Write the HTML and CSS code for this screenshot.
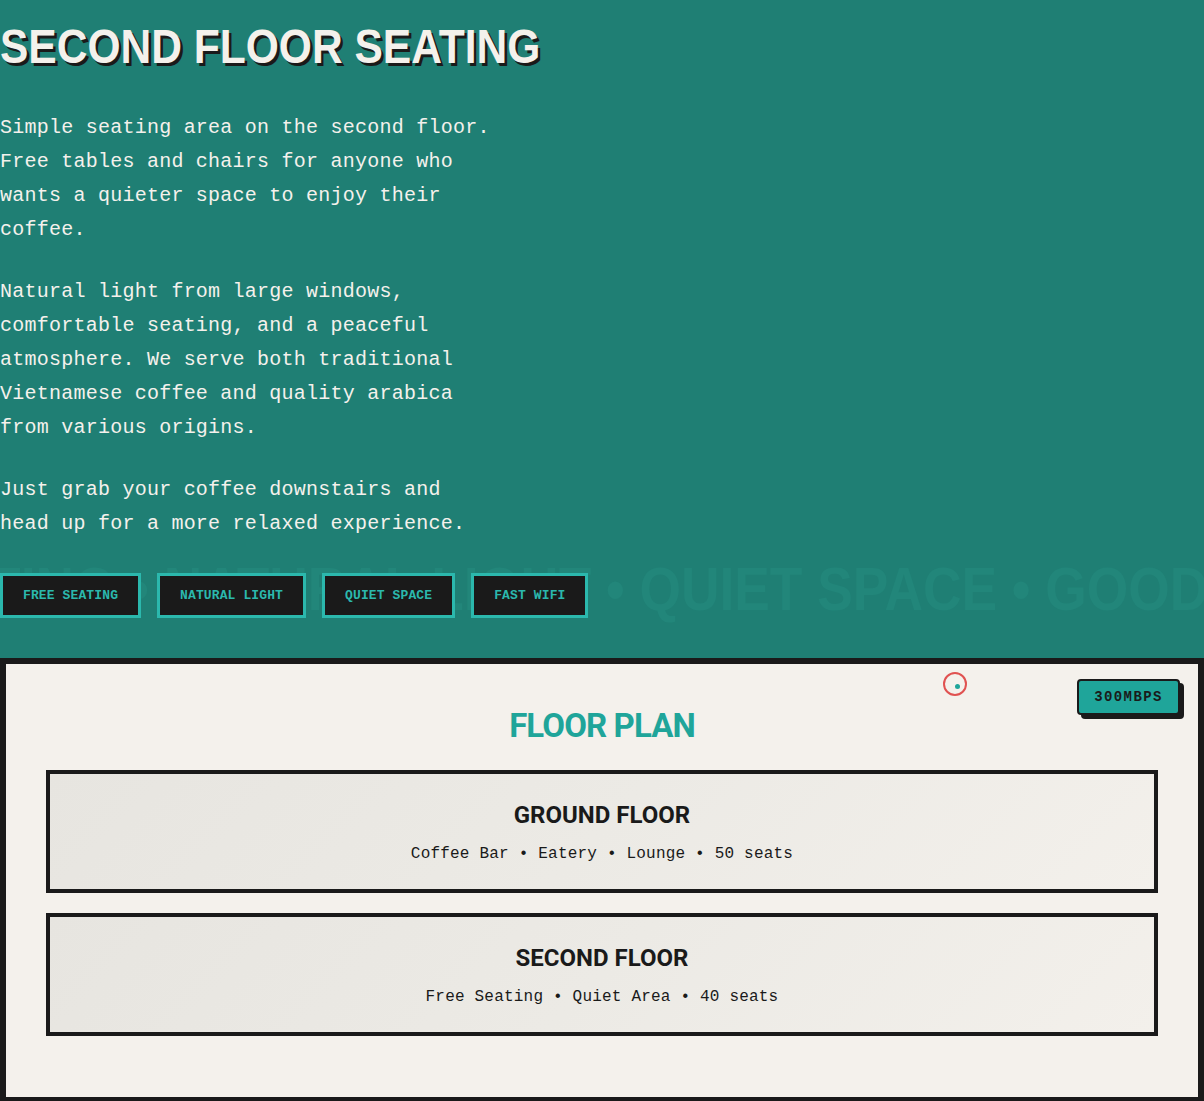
FILE: index.html
```html
<!DOCTYPE html>
<html lang="en">
<head>
<meta charset="utf-8">
<title>Second Floor Seating</title>
<link rel="stylesheet" href="styles.css">
</head>
<body>
<section class="hero">
  <h1 class="hero-title">SECOND FLOOR SEATING</h1>
  <div class="hero-copy">
    <p>Simple seating area on the second floor. Free tables and chairs for anyone who wants a quieter space to enjoy their coffee.</p>
    <p>Natural light from large windows, comfortable seating, and a peaceful atmosphere. We serve both traditional Vietnamese coffee and quality arabica from various origins.</p>
    <p>Just grab your coffee downstairs and head up for a more relaxed experience.</p>
  </div>
  <div class="tag-row">
    <div class="watermark" aria-hidden="true">
      <span class="watermark-lead"><span class="watermark-text lead-text">FREE SEATING • NATURAL LIGHT&nbsp;</span></span>
      <span class="watermark-text tail-text">• QUIET SPACE • GOOD COFFEE • FREE SEATING</span>
    </div>
    <span class="tag">FREE SEATING</span>
    <span class="tag">NATURAL LIGHT</span>
    <span class="tag">QUIET SPACE</span>
    <span class="tag">FAST WIFI</span>
  </div>
</section>

<section class="plan">
  <span class="cursor-ring"><span class="cursor-dot"></span></span>
  <span class="speed-badge">300MBPS</span>
  <h2 class="plan-title">FLOOR PLAN</h2>
  <div class="floor-list">
    <div class="floor-card">
      <h3 class="floor-name">GROUND FLOOR</h3>
      <p class="floor-meta">Coffee Bar • Eatery • Lounge • 50 seats</p>
    </div>
    <div class="floor-card">
      <h3 class="floor-name">SECOND FLOOR</h3>
      <p class="floor-meta">Free Seating • Quiet Area • 40 seats</p>
    </div>
  </div>
</section>
</body>
</html>
```

FILE: styles.css
```css
html, body {
  margin: 0;
  padding: 0;
}

body {
  background: #1f7f74;
  color: #f4f1ec;
  font-family: "Liberation Mono", "DejaVu Sans Mono", monospace;
  overflow-x: hidden;
}

.hero {
  background: #1f7f74;
  padding: 23px 0 40px 0;
  overflow: hidden;
}

.hero-title {
  margin: 0;
  font-family: "Liberation Sans", Arial, sans-serif;
  font-weight: 700;
  font-size: 48px;
  line-height: 48px;
  letter-spacing: 0;
  color: #f4f1ec;
  text-shadow: 3px 3px 0 #1a1a1a;
  white-space: nowrap;
  transform: scaleX(0.886);
  transform-origin: left center;
}

.hero-copy {
  margin-top: 40px;
  max-width: 500px;
}

.hero-copy p {
  margin: 0 0 28px 0;
  font-size: 20px;
  line-height: 34px;
  letter-spacing: 0.24px;
  color: #f4f1ec;
}

.hero-copy p:last-child {
  margin-bottom: 0;
}

.tag-row {
  position: relative;
  margin-top: 32px;
  display: flex;
  gap: 16px;
  align-items: flex-start;
}

.watermark {
  position: absolute;
  left: 0;
  right: 0;
  top: -15px;
  display: flex;
  white-space: nowrap;
  font-family: "Liberation Sans", Arial, sans-serif;
  font-weight: 700;
  font-size: 62px;
  line-height: 62px;
  color: #22867a;
  pointer-events: none;
}

.watermark-lead {
  flex: 0 0 606px;
  min-width: 0;
  width: 606px;
  display: flex;
  justify-content: flex-end;
}

.watermark-text {
  display: inline-block;
  flex: 0 0 auto;
}

.lead-text {
  transform: scaleX(0.86);
  transform-origin: right center;
}

.tail-text {
  transform: scaleX(0.86);
  transform-origin: left center;
}

.tag {
  position: relative;
  display: block;
  border: 3px solid #2bb8ad;
  background: #1a1a1a;
  color: #2bb8ad;
  padding: 12px 20px;
  font-family: "Liberation Mono", "DejaVu Sans Mono", monospace;
  font-weight: 700;
  font-size: 13px;
  line-height: 15px;
  letter-spacing: 0.12px;
  white-space: nowrap;
}

.plan {
  position: relative;
  background: #f4f1ec;
  border: 6px solid #1a1a1a;
  padding: 41px 40px 61px 40px;
  color: #1a1a1a;
}

.cursor-ring {
  position: absolute;
  left: 937px;
  top: 8px;
  width: 20px;
  height: 20px;
  border: 2px solid #e05251;
  border-radius: 50%;
}

.cursor-dot {
  position: absolute;
  left: 10px;
  top: 10px;
  width: 5px;
  height: 5px;
  border-radius: 50%;
  background: #1fa59a;
}

.speed-badge {
  position: absolute;
  right: 18px;
  top: 15px;
  width: 99px;
  height: 32px;
  display: flex;
  align-items: center;
  justify-content: center;
  background: #1fa59a;
  border: 2px solid #1a1a1a;
  border-radius: 4px;
  box-shadow: 4px 4px 0 #1a1a1a;
  font-family: "Liberation Mono", "DejaVu Sans Mono", monospace;
  font-weight: 700;
  font-size: 14px;
  letter-spacing: 1.4px;
  color: #1a1a1a;
}

.plan-title {
  margin: 0 0 24px 0;
  text-align: center;
  font-family: Roboto, "Liberation Sans", sans-serif;
  font-weight: 700;
  font-size: 33px;
  line-height: 41px;
  letter-spacing: -0.9px;
  color: #1fa59a;
}

.floor-list {
  display: flex;
  flex-direction: column;
  gap: 20px;
}

.floor-card {
  border: 4px solid #1a1a1a;
  background: linear-gradient(135deg, #e7e5e0 0%, #eceae5 50%, #f3f0eb 100%);
  padding: 27px 20px 23px 20px;
  text-align: center;
}

.floor-name {
  margin: 0 0 12px 0;
  font-family: Roboto, "Liberation Sans", sans-serif;
  font-weight: 700;
  font-size: 24px;
  line-height: 29px;
  color: #1a1a1a;
}

.floor-meta {
  margin: 0;
  font-family: "Liberation Mono", "DejaVu Sans Mono", monospace;
  font-size: 16px;
  line-height: 24px;
  letter-spacing: 0.2px;
  color: #1a1a1a;
}
```
